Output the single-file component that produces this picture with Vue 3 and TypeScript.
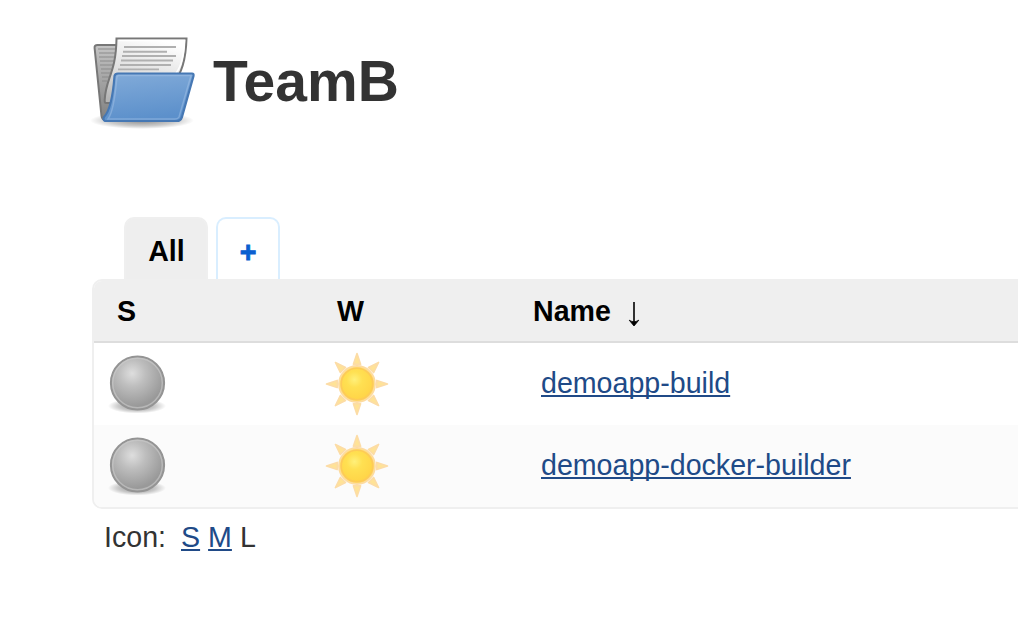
<script setup lang="ts">
interface Job {
  name: string
}

const jobs: Job[] = [{ name: 'demoapp-build' }, { name: 'demoapp-docker-builder' }]
const rays: number[] = [0, 45, 90, 135, 180, 225, 270, 315]
</script>

<template>
  <svg class="defs" width="0" height="0" aria-hidden="true">
    <defs>
      <radialGradient id="ball" cx="0.4" cy="0.32" r="0.62">
        <stop offset="0" stop-color="#dedede" />
        <stop offset="0.4" stop-color="#bebebe" />
        <stop offset="1" stop-color="#999" />
      </radialGradient>
      <radialGradient id="shadow">
        <stop offset="0" stop-color="#000" stop-opacity="0.45" />
        <stop offset="0.65" stop-color="#000" stop-opacity="0.2" />
        <stop offset="1" stop-color="#000" stop-opacity="0" />
      </radialGradient>
      <radialGradient id="sun" cx="0.42" cy="0.36" r="0.62">
        <stop offset="0" stop-color="#fff07a" />
        <stop offset="0.4" stop-color="#ffe052" />
        <stop offset="1" stop-color="#ffd548" />
      </radialGradient>
    </defs>
  </svg>
  <main class="page">
    <header class="heading">
      <svg class="folder" width="110" height="100" viewBox="0 0 110 100">
        <defs>
          <linearGradient id="blue" x1="0" y1="0" x2="0.2" y2="1">
            <stop offset="0" stop-color="#82abd9" />
            <stop offset="1" stop-color="#5c90cb" />
          </linearGradient>
          <linearGradient id="back" x1="0" y1="0" x2="0" y2="1">
            <stop offset="0" stop-color="#c4c4c4" />
            <stop offset="1" stop-color="#808080" />
          </linearGradient>
          <linearGradient id="paper" x1="0.6" y1="0" x2="0.25" y2="1">
            <stop offset="0" stop-color="#fff" />
            <stop offset="0.6" stop-color="#dcdcdc" />
            <stop offset="1" stop-color="#b5b5b5" />
          </linearGradient>
        </defs>
        <ellipse cx="53" cy="87.5" rx="52" ry="8.5" fill="url(#shadow)" />
        <path d="M8.5 12Q5.3 12 5.6 15L12.5 83Q13 87 17 87L26 84L45 12Z" fill="url(#back)" stroke="#777" stroke-width="2" />
        <path d="M9 16H27M10 20H27M10 24H26M11 28H26M11 32H24M12 36H22M12 40H21M13 44H20M13 48H18" stroke="#8c8c8c" stroke-width="1.2" />
        <path d="M27.5 5.5H97.5C97 23 94 40 84 50L30 70H17Q15.5 70 15.7 67C16.5 45 27 41 27.5 5.5Z" fill="url(#paper)" stroke="#777" stroke-width="2" />
        <path d="M29.5 7.5H95.5C94.8 22 92 34 87 40" fill="none" stroke="#fff" stroke-width="1.5" />
        <path d="M35 14H87M34 18.7H78M33 23H87M32 27.5H84M31 32H82M29 36.4H70" stroke="#b0b0b0" stroke-width="1.9" />
        <path d="M29 40.5H103Q105 40.5 104.5 43L93 84Q91.5 88 88 88H16Q13.5 87 15 84Q23 76 25.5 43Q26 40.5 29 40.5Z" fill="url(#blue)" stroke="#4678b4" stroke-width="2.2" />
        <path d="M30 42.5H102L90 84Q89 86 86 86H19Q25 78 27.8 45Q28 42.5 30 42.5Z" fill="none" stroke="#a8c6e8" stroke-opacity="0.45" stroke-width="1.5" />
      </svg>
      <h1>TeamB</h1>
    </header>

    <nav class="tabs">
      <a class="tab active">All</a>
      <a class="tab add">+</a>
    </nav>

    <section class="jobs">
      <div class="row head">
        <span>S</span>
        <span>W</span>
        <span class="name-head">Name<svg width="14" height="26" viewBox="0 0 14 26"><path d="M7 1V22" stroke="#000" stroke-width="1.6" /><path d="M2.2 19.2L7 25L11.8 19.2Q9 20.8 7 20.8Q5 20.8 2.2 19.2Z" stroke="#000" stroke-width="0.8" /></svg></span>
      </div>
      <div v-for="job in jobs" :key="job.name" class="row job">
        <svg class="ball" width="64" height="64" viewBox="0 0 64 64">
          <ellipse cx="32" cy="54" rx="29" ry="7.5" fill="url(#shadow)" />
          <circle cx="32.5" cy="31" r="26.6" fill="url(#ball)" stroke="#949494" stroke-width="2" />
          <circle cx="32.5" cy="31" r="24.8" fill="none" stroke="#ccc" stroke-opacity="0.6" stroke-width="1.5" />
        </svg>
        <svg class="sun" width="64" height="64" viewBox="0 0 64 64">
          <path
            v-for="angle in rays"
            :key="angle"
            d="M32 1.5L35.6 12.2H28.4Z"
            fill="#ffe396"
            stroke="#fcdca6"
            stroke-width="1.6"
            stroke-linejoin="round"
            :transform="`rotate(${angle} 32 32)`"
          />
          <circle cx="32" cy="32" r="18" fill="#ffde70" stroke="#fddba0" stroke-width="1.8" />
          <circle cx="32" cy="32" r="15.8" fill="url(#sun)" stroke="#fdca58" stroke-width="1.6" />
        </svg>
        <a class="link">{{ job.name }}</a>
      </div>
    </section>

    <footer class="sizes">
      <span class="label">Icon:</span><a class="link">S</a><a class="link">M</a><span>L</span>
    </footer>
  </main>
</template>

<style>
body {
  background: #fff;
  overflow: hidden;
}
</style>

<style scoped>
.defs {
  display: block;
}
.page {
  box-sizing: border-box;
  width: 1018px;
  height: 630px;
  padding: 33px 0 0 92px;
  overflow: hidden;
  color: #333;
  font: 28.6px/34px "Liberation Sans", Arial, sans-serif;
}
.heading {
  display: flex;
  height: 184px;
}
.folder {
  margin-left: -3px;
}
h1 {
  margin: 15px 0 0 14px;
  font-size: 57px;
  line-height: 66px;
}
.tabs {
  display: flex;
  gap: 8px;
  height: 62px;
  padding-left: 32px;
}
.tab {
  box-sizing: border-box;
  height: 62px;
  border: 2px solid #efefef;
  border-bottom: 0;
  border-radius: 10px 10px 0 0;
  color: #000;
  font-weight: bold;
  line-height: 64px;
  text-align: center;
}
.active {
  width: 84px;
  padding-left: 1px;
  background: #eee;
}
.add {
  width: 64px;
  border-color: #d9eeff;
  color: #0b5fd0;
  line-height: 66px;
  -webkit-text-stroke: 0.8px #0b5fd0;
}
.jobs {
  width: 960px;
  box-sizing: border-box;
  height: 230px;
  border: 2px solid #efefef;
  border-radius: 10px;
  overflow: hidden;
}
.row {
  display: grid;
  grid-template-columns: 220px 196px 1fr;
  align-items: center;
  box-sizing: border-box;
}
.head {
  height: 62px;
  padding-left: 23px;
  border-bottom: 2px solid #ddd;
  background: #efefef;
  color: #000;
  font-weight: bold;
}
.name-head {
  display: flex;
  align-items: center;
  gap: 16px;
}
.name-head svg {
  margin-top: 5px;
}
.job {
  grid-template-columns: 220px 216px 1fr;
  height: 82px;
  padding-left: 11px;
}
.job .link {
  margin-bottom: 2px;
}
.job:nth-child(odd) {
  background: #fbfbfb;
}
.link {
  color: #204a87;
  text-decoration: underline;
  text-decoration-thickness: 2px;
  text-decoration-skip-ink: none;
  text-underline-offset: 2px;
}
.sizes {
  display: flex;
  gap: 8px;
  padding: 11px 0 0 12px;
}
.label {
  margin-right: 7px;
}
</style>
